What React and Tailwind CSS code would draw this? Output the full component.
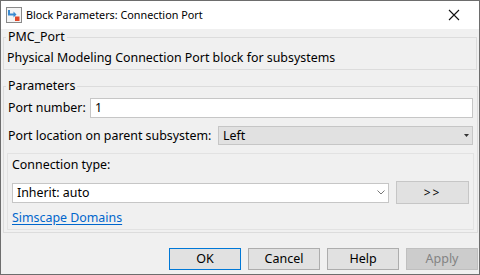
import React from 'react'

function BlockIcon() {
  return (
    <svg width="16" height="16" viewBox="0 0 16 16">
      <rect x="0.5" y="0.5" width="15" height="15" fill="#f4f4f4" stroke="#8a8a8a" />
      <path d="M3 3 L3 7.5 L8 7.5" fill="none" stroke="#3a8ad0" strokeWidth="2" />
      <path d="M7.5 4.5 L10.5 7.5 L7.5 10.5 Z" fill="#3a8ad0" />
      <rect x="9" y="9.5" width="4.5" height="4.5" fill="#e2492b" />
    </svg>
  )
}

function Btn({ children, primary, disabled }) {
  return (
    <button
      className={
        'w-[72px] h-[22px] text-[12.5px] border ' +
        (primary
          ? 'bg-[#e1e1e1] border-[#0078d7] text-black'
          : disabled
          ? 'bg-[#cccccc] border-[#bfbfbf] text-[#838383]'
          : 'bg-[#e1e1e1] border-[#adadad] text-black')
      }
    >
      {children}
    </button>
  )
}

export default function App() {
  return (
    <div
      className="w-[480px] h-[275px] bg-[#f0f0f0] border border-[#6d6d6d] flex flex-col text-[12.4px] leading-[16px] text-black overflow-hidden"
      style={{ fontFamily: '"Segoe UI", "Noto Sans", "Open Sans", sans-serif' }}
    >
      <div className="h-[28px] bg-white flex items-center pl-[5px] pr-[19px] shrink-0">
        <BlockIcon />
        <span className="ml-[4px] text-[10.8px]">Block Parameters: Connection Port</span>
        <svg className="ml-auto" width="12" height="12" viewBox="0 0 12 12">
          <path d="M1 1 L11 11 M11 1 L1 11" stroke="#111" strokeWidth="1.1" />
        </svg>
      </div>

      <div className="px-[2px]">
        <fieldset className="border border-[#dcdcdc] px-[3px] pb-[3px]">
          <legend className="px-[2px] -ml-[1px]">PMC_Port</legend>
          <div className="mt-[5px]">Physical Modeling Connection Port block for subsystems</div>
        </fieldset>

        <fieldset className="mt-[8px] border border-[#dcdcdc] px-[3px] pb-[2px]">
          <legend className="px-[2px] -ml-[1px]">Parameters</legend>
          <div className="flex items-center mt-[4px]">
            <span className="ml-[1px] w-[82px]">Port number:</span>
            <div className="flex-1 h-[20px] bg-white border border-[#c6c6c6] flex items-center pl-[4px] mr-[1px]">1</div>
          </div>
          <div className="flex items-center mt-[8px]">
            <span className="ml-[1px] w-[210px]">Port location on parent subsystem:</span>
            <div className="flex-1 h-[19px] bg-[#e1e1e1] border border-[#c6c6c6] flex items-center pl-[4px] pr-[3px] mr-[1px]">
              <span>Left</span>
              <svg className="ml-auto" width="5" height="3" viewBox="0 0 5 3">
                <path d="M0 0 L5 0 L2.5 3 Z" fill="#333" />
              </svg>
            </div>
          </div>
          <div className="mt-[8px] border border-[#e2e2e2] px-[4px] pt-[3px] pb-[3px]">
            <div>Connection type:</div>
            <div className="flex items-center mt-[8px] gap-[7px]">
              <div className="w-[377px] h-[20px] bg-white border border-[#c6c6c6] flex items-center pl-[4px] pr-[3px]">
                <span>Inherit: auto</span>
                <svg className="ml-auto" width="8" height="5" viewBox="0 0 8 5">
                  <path d="M0.5 0.5 L4 4 L7.5 0.5" fill="none" stroke="#777" strokeWidth="1" />
                </svg>
              </div>
              <button className="w-[73px] h-[23px] bg-[#e1e1e1] border border-[#c6c6c6] text-[12px] tracking-[2px]">&gt;&gt;</button>
            </div>
            <div className="mt-[6px]">
              <a className="text-[#0066cc] underline underline-offset-[2px] decoration-[#0066cc]">Simscape Domains</a>
            </div>
          </div>
        </fieldset>
      </div>

      <div className="flex justify-end gap-[7px] mt-auto mb-[4px] pr-[1px]">
        <Btn primary>OK</Btn>
        <Btn>Cancel</Btn>
        <Btn>Help</Btn>
        <Btn disabled>Apply</Btn>
      </div>
    </div>
  )
}
